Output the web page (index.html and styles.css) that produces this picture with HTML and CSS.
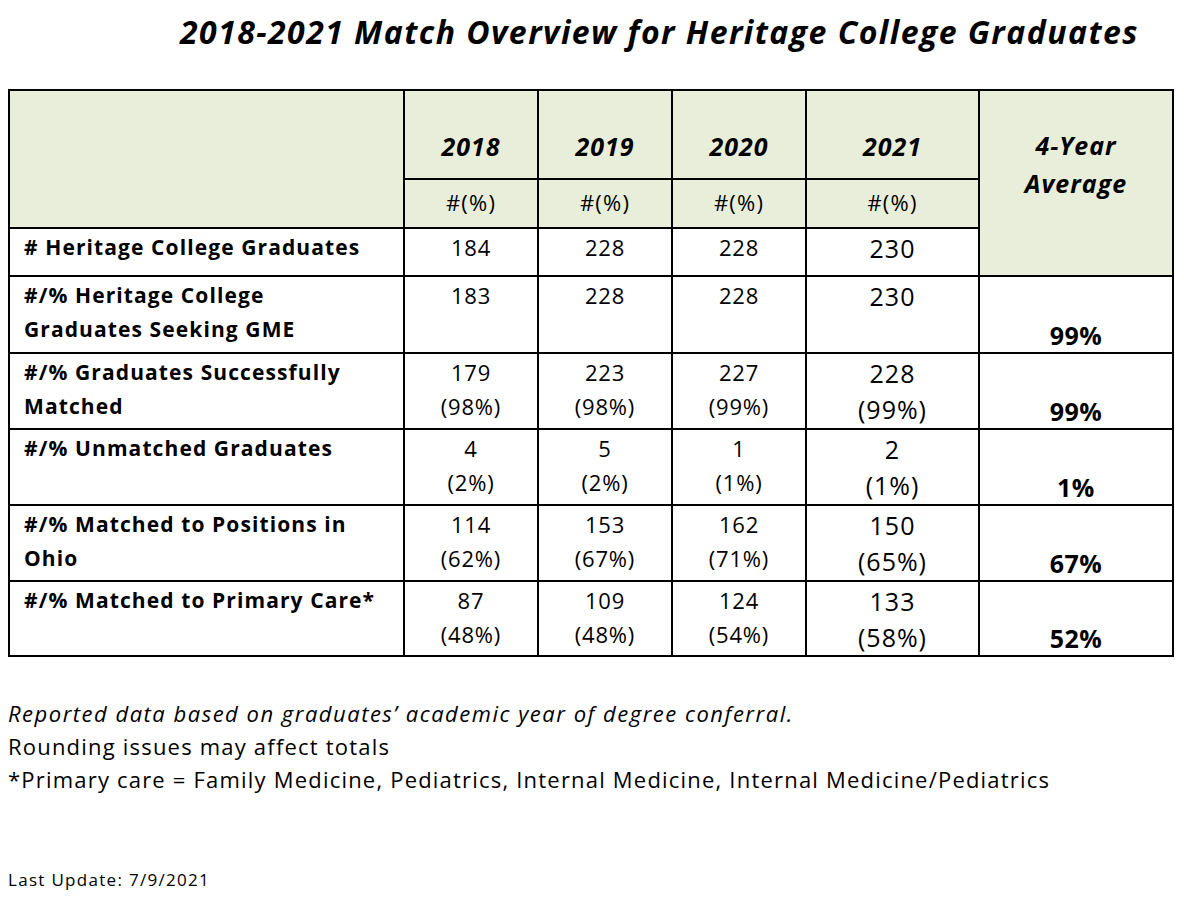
FILE: index.html
```html
<!DOCTYPE html>
<html lang="en">
<head>
<meta charset="utf-8">
<title>2018-2021 Match Overview for Heritage College Graduates</title>
<link rel="stylesheet" href="styles.css">
</head>
<body>
<h1 class="title">2018-2021 Match Overview for Heritage College Graduates</h1>
<table class="match">
  <colgroup>
    <col class="c-label"><col class="c-year"><col class="c-year"><col class="c-year"><col class="c-last"><col class="c-avg">
  </colgroup>
  <tbody>
    <tr class="h1">
      <td class="head blank" rowspan="2"></td>
      <td class="head year">2018</td>
      <td class="head year">2019</td>
      <td class="head year">2020</td>
      <td class="head year">2021</td>
      <td class="head avghead" rowspan="3">4-Year<br>Average</td>
    </tr>
    <tr class="h2">
      <td class="head unit">#(%)</td>
      <td class="head unit">#(%)</td>
      <td class="head unit">#(%)</td>
      <td class="head unit">#(%)</td>
    </tr>
    <tr class="r1">
      <td class="label">#&nbsp;Heritage College Graduates</td>
      <td class="num">184</td>
      <td class="num">228</td>
      <td class="num">228</td>
      <td class="num big">230</td>
    </tr>
    <tr class="r2">
      <td class="label">#/% Heritage College<br>Graduates Seeking GME</td>
      <td class="num">183</td>
      <td class="num">228</td>
      <td class="num">228</td>
      <td class="num big">230</td>
      <td class="avg">99%</td>
    </tr>
    <tr class="r3">
      <td class="label">#/% Graduates Successfully<br>Matched</td>
      <td class="num">179<br>(98%)</td>
      <td class="num">223<br>(98%)</td>
      <td class="num">227<br>(99%)</td>
      <td class="num big">228<br>(99%)</td>
      <td class="avg">99%</td>
    </tr>
    <tr class="r3">
      <td class="label">#/% Unmatched Graduates</td>
      <td class="num">4<br>(2%)</td>
      <td class="num">5<br>(2%)</td>
      <td class="num">1<br>(1%)</td>
      <td class="num big">2<br>(1%)</td>
      <td class="avg">1%</td>
    </tr>
    <tr class="r3">
      <td class="label">#/% Matched to Positions in<br>Ohio</td>
      <td class="num">114<br>(62%)</td>
      <td class="num">153<br>(67%)</td>
      <td class="num">162<br>(71%)</td>
      <td class="num big">150<br>(65%)</td>
      <td class="avg">67%</td>
    </tr>
    <tr class="r4">
      <td class="label">#/% Matched to Primary Care*</td>
      <td class="num">87<br>(48%)</td>
      <td class="num">109<br>(48%)</td>
      <td class="num">124<br>(54%)</td>
      <td class="num big">133<br>(58%)</td>
      <td class="avg">52%</td>
    </tr>
  </tbody>
</table>
<div class="notes">
  <p class="note italic">Reported data based on graduates’ academic year of degree conferral.</p>
  <p class="note">Rounding issues may affect totals</p>
  <p class="note">*Primary care = Family Medicine, Pediatrics, Internal Medicine, Internal Medicine/Pediatrics</p>
</div>
<p class="updated">Last Update: 7/9/2021</p>
</body>
</html>
```
FILE: styles.css
```css
html, body {
  background: #ffffff;
}
body {
  margin: 0;
  padding: 0 8px;
  color: #000000;
  font-family: "Open Sans", Lato, "Liberation Sans", sans-serif;
}
.title {
  margin: 0;
  padding: 12px 0 0 172px;
  height: 89px;
  box-sizing: border-box;
  font-size: 32px;
  line-height: 40px;
  font-weight: 700;
  font-style: italic;
  letter-spacing: 1.45px;
  white-space: nowrap;
}
.match {
  border-collapse: collapse;
  table-layout: fixed;
  width: 1163px;
}
.c-label { width: 395px; }
.c-year { width: 134px; }
.c-last { width: 173px; }
.c-avg { width: 194px; }
.match td {
  border: 2px solid #000000;
  padding: 0;
  font-size: 22px;
  line-height: 34px;
}
.head {
  background: #e9eedb;
  text-align: center;
}
.h1 { height: 89px; }
.h2 { height: 49px; }
.r1 { height: 48px; }
.r2 { height: 77px; }
.r3 { height: 76px; }
.r4 { height: 75px; }
.year {
  vertical-align: bottom;
  font-weight: 700;
  font-style: italic;
  font-size: 25px !important;
  letter-spacing: 1px;
  padding-bottom: 15px !important;
}
.unit {
  vertical-align: middle;
  letter-spacing: 1.2px;
  padding-bottom: 4px !important;
}
.avghead {
  vertical-align: top;
  font-weight: 700;
  font-style: italic;
  font-size: 25px !important;
  letter-spacing: 1px;
  line-height: 38px !important;
  padding-top: 35px !important;
}
.label {
  vertical-align: top;
  font-weight: 700;
  font-size: 21px !important;
  letter-spacing: 1.1px;
  padding: 1px 0 0 14px !important;
  white-space: nowrap;
}
.num {
  vertical-align: top;
  text-align: center;
  letter-spacing: 0.8px;
  padding-top: 1px !important;
}
.num.big {
  font-size: 25px;
  line-height: 36px;
  letter-spacing: 1px;
}
.avg {
  vertical-align: bottom;
  text-align: center;
  font-weight: 700;
  font-size: 25px !important;
  letter-spacing: 0.5px;
  padding-bottom: 0 !important;
}
.notes {
  margin-top: 40px;
}
.note {
  margin: 0;
  font-size: 22px;
  line-height: 33px;
  letter-spacing: 1.2px;
}
.italic {
  letter-spacing: 1.5px;
  font-style: italic;
}
.updated {
  margin: 74px 0 0;
  font-size: 17px;
  line-height: 20px;
  letter-spacing: 1.3px;
}
```
